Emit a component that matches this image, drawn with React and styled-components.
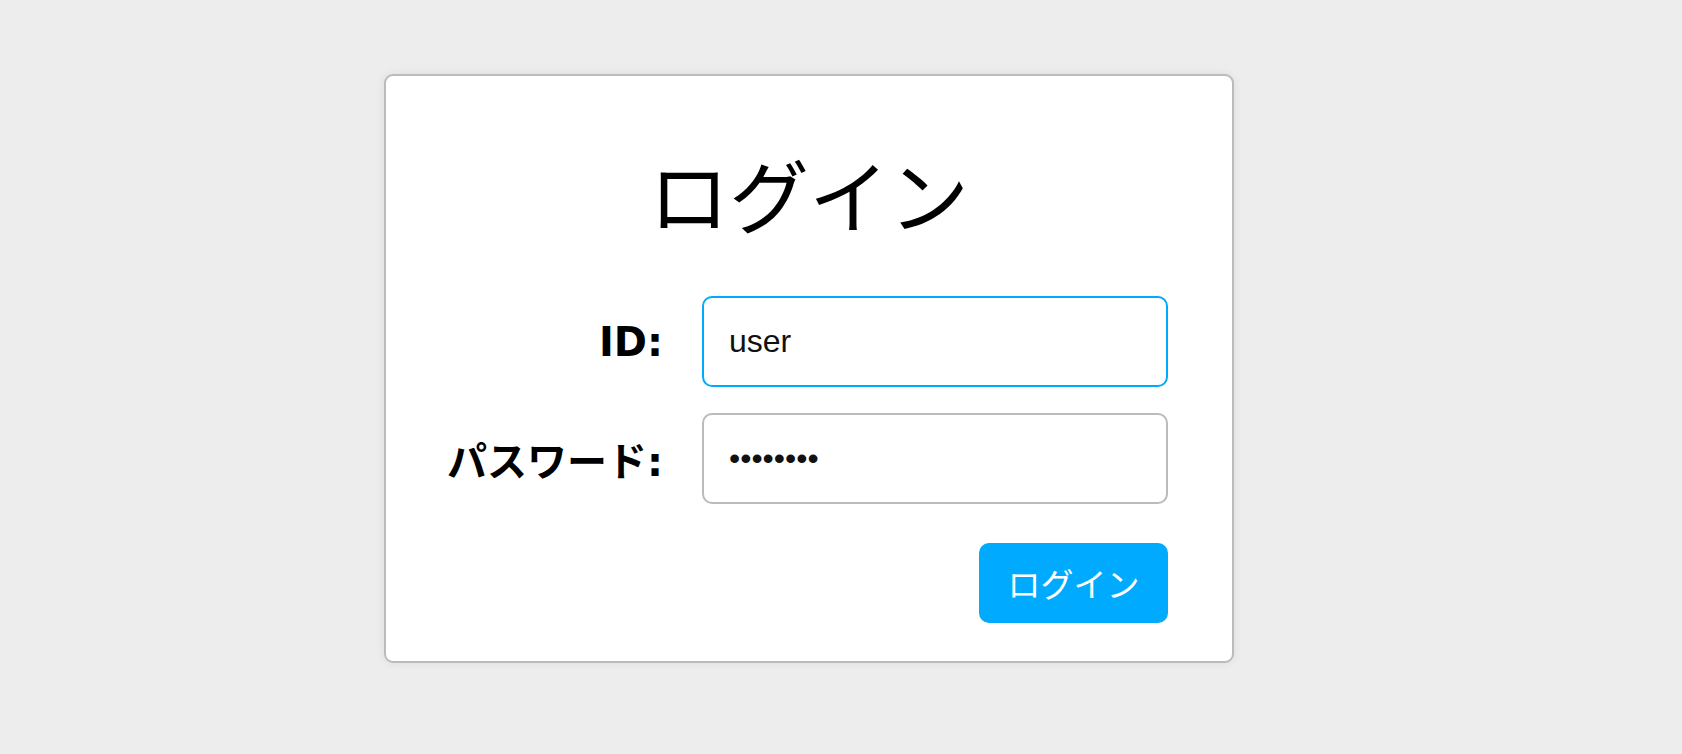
import React, { useState } from 'react';
import styled, { createGlobalStyle } from 'styled-components';

const GlobalStyle = createGlobalStyle`
  html, body {
    margin: 0;
    padding: 0;
    background: #ededed;
  }
  * {
    box-sizing: border-box;
  }
`;

const Page = styled.main`
  display: flex;
  align-items: flex-start;
  padding: 74px 0 0 384px;
  min-height: 754px;
`;

const Card = styled.section`
  width: 850px;
  padding: 40px 64px 38px 58px;
  background: #fff;
  border: 2px solid #bbbbbb;
  border-radius: 9px;
  box-shadow: 0 0 10px rgba(0, 0, 0, 0.07);
  display: flex;
  flex-direction: column;
`;

const Title = styled.h1`
  margin: 28px 0 56px 6px;
  font-family: 'Noto Sans CJK JP', sans-serif;
  font-size: 80px;
  font-weight: 400;
  line-height: 96px;
  text-align: center;
  color: #000;
`;

const Form = styled.form`
  display: grid;
  grid-template-columns: 1fr 466px;
  column-gap: 39px;
  row-gap: 26px;
  align-items: center;
`;

const Label = styled.label`
  font-family: 'DejaVu Sans', 'Noto Sans CJK JP', sans-serif;
  font-size: 40px;
  font-weight: 700;
  text-align: right;
  white-space: nowrap;
  color: #000;
`;

const Input = styled.input`
  width: 100%;
  height: 91px;
  padding: 0 25px;
  border: 2px solid ${({ $active }) => ($active ? '#00aaff' : '#bbbbbb')};
  border-radius: 10px;
  font-family: 'Liberation Sans', Arial, sans-serif;
  font-size: 32px;
  color: #111;
  caret-color: #000;
  outline: none;
  background: #fff;
`;

const Actions = styled.div`
  grid-column: 1 / -1;
  display: flex;
  justify-content: flex-end;
  margin-top: 13px;
`;

const Button = styled.button`
  width: 189px;
  height: 80px;
  border: none;
  border-radius: 10px;
  background: #00aaff;
  color: #fff;
  font-family: 'Noto Sans CJK JP', sans-serif;
  font-size: 33px;
  cursor: pointer;
`;

export default function App() {
  const [id, setId] = useState('user');
  const [password, setPassword] = useState('password');

  return (
    <>
      <GlobalStyle />
      <Page>
        <Card>
          <Title>ログイン</Title>
          <Form onSubmit={(e) => e.preventDefault()}>
            <Label htmlFor="login-id">ID:</Label>
            <Input
              id="login-id"
              $active
              autoFocus
              value={id}
              onChange={(e) => setId(e.target.value)}
            />
            <Label htmlFor="login-pass">パスワード:</Label>
            <Input
              id="login-pass"
              type="password"
              value={password}
              onChange={(e) => setPassword(e.target.value)}
            />
            <Actions>
              <Button type="submit">ログイン</Button>
            </Actions>
          </Form>
        </Card>
      </Page>
    </>
  );
}
